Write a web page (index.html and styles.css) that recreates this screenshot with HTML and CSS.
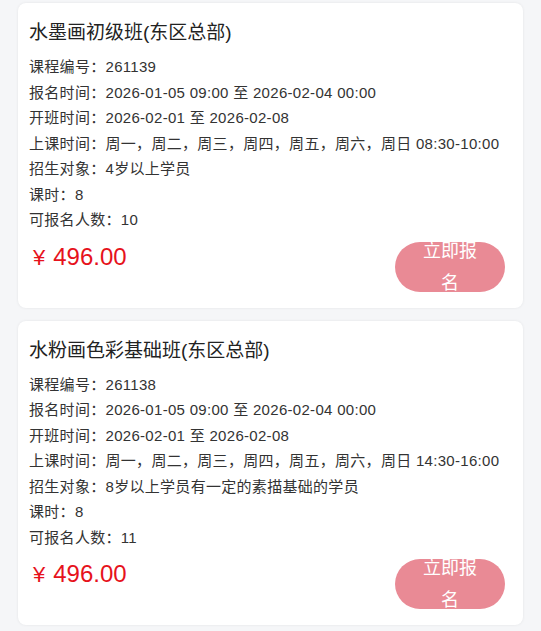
FILE: index.html
```html
<!DOCTYPE html>
<html lang="zh-CN">
<head>
    <meta charset="UTF-8">
    <meta name="viewport" content="width=device-width, initial-scale=1.0">
    <title>课程列表</title>
    <link rel="stylesheet" href="styles.css">
</head>
<body>
    <div class="list">
        <div class="card">
            <div class="title">水墨画初级班(东区总部)</div>
            <div class="info">课程编号：261139</div>
            <div class="info">报名时间：2026-01-05 09:00 至 2026-02-04 00:00</div>
            <div class="info">开班时间：2026-02-01 至 2026-02-08</div>
            <div class="info">上课时间：周一，周二，周三，周四，周五，周六，周日 08:30-10:00</div>
            <div class="info">招生对象：4岁以上学员</div>
            <div class="info">课时：8</div>
            <div class="info">可报名人数：10</div>
            <div class="bottom">
                <div class="price"><span class="yen">¥</span>496.00</div>
                <button class="btn">立即报名</button>
            </div>
        </div>

        <div class="card">
            <div class="title">水粉画色彩基础班(东区总部)</div>
            <div class="info">课程编号：261138</div>
            <div class="info">报名时间：2026-01-05 09:00 至 2026-02-04 00:00</div>
            <div class="info">开班时间：2026-02-01 至 2026-02-08</div>
            <div class="info">上课时间：周一，周二，周三，周四，周五，周六，周日 14:30-16:00</div>
            <div class="info">招生对象：8岁以上学员有一定的素描基础的学员</div>
            <div class="info">课时：8</div>
            <div class="info">可报名人数：11</div>
            <div class="bottom">
                <div class="price"><span class="yen">¥</span>496.00</div>
                <button class="btn">立即报名</button>
            </div>
        </div>
    </div>
</body>
</html>
```

FILE: styles.css
```css
body {
    margin: 0;
    background-color: #f5f6f8;
    font-family: "Liberation Sans", "Noto Sans CJK SC", sans-serif;
    color: #333;
}
.list {
    display: flex;
    flex-direction: column;
    gap: 13px;
    padding: 3px 18px;
}
.card {
    background-color: #fff;
    border-radius: 8px;
    box-shadow: 0 0 3px rgba(0, 0, 0, 0.08);
    padding: 16px 18px 16px 11px;
}
.title {
    font-size: 19px;
    line-height: 28px;
    color: #222;
    margin-bottom: 7px;
}
.info {
    font-size: 15px;
    line-height: 25.5px;
    letter-spacing: 0.3px;
    color: #333;
}
.bottom {
    display: flex;
    justify-content: space-between;
    align-items: flex-start;
    margin-top: 9px;
}
.price {
    font-size: 24px;
    line-height: 30px;
    color: #e6121c;
    padding-left: 4px;
}
.yen {
    font-size: 22px;
    margin-right: 8px;
}
.btn {
    width: 110px;
    height: 50px;
    padding: 0 24px;
    border: none;
    border-radius: 25px;
    background-color: #e98a95;
    color: #fff;
    font-family: "Liberation Sans", "Noto Sans CJK SC", sans-serif;
    font-size: 18px;
    line-height: 32px;
    display: flex;
    align-items: center;
    justify-content: center;
    text-align: center;
    overflow: visible;
}
```
